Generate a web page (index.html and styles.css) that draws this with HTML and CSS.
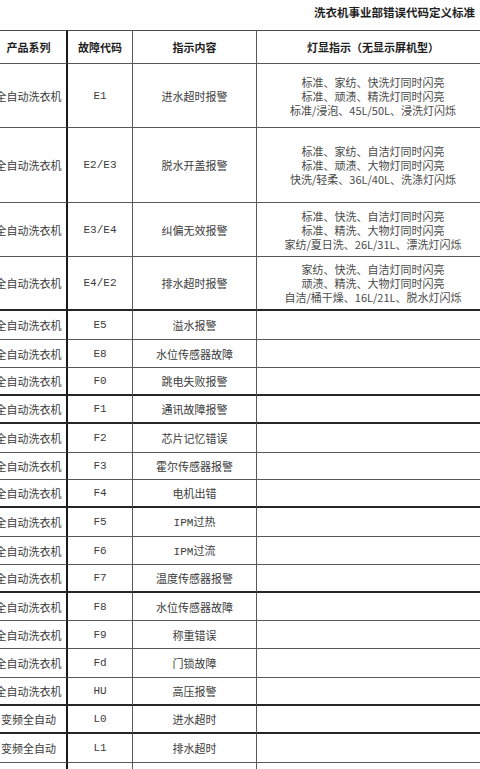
FILE: index.html
```html
<!DOCTYPE html>
<html lang="zh-CN">
<head>
<meta charset="utf-8">
<title>洗衣机事业部错误代码定义标准</title>
<link rel="stylesheet" href="styles.css">
</head>
<body>
<div class="sheet">
  <div class="title">洗衣机事业部错误代码定义标准</div>
  <table class="codes">
    <colgroup>
      <col class="c1"><col class="c2"><col class="c3"><col class="c4">
    </colgroup>
    <thead>
      <tr class="head">
        <th class="series">产品系列</th>
        <th class="code">故障代码</th>
        <th>指示内容</th>
        <th>灯显指示（无显示屏机型）</th>
      </tr>
    </thead>
    <tbody>
      <tr class="h64"><td class="series">全自动洗衣机</td><td class="code mono">E1</td><td class="code">进水超时报警</td><td class="lamp">标准、家纺、快洗灯同时闪亮<br>标准、顽渍、精洗灯同时闪亮<br>标准/浸泡、45L/50L、浸洗灯闪烁</td></tr>
      <tr class="h75"><td class="series">全自动洗衣机</td><td class="code mono">E2/E3</td><td class="code">脱水开盖报警</td><td class="lamp">标准、家纺、自洁灯同时闪亮<br>标准、顽渍、大物灯同时闪亮<br>快洗/轻柔、36L/40L、洗涤灯闪烁</td></tr>
      <tr class="h54"><td class="series">全自动洗衣机</td><td class="code mono">E3/E4</td><td class="code">纠偏无效报警</td><td class="lamp">标准、快洗、自洁灯同时闪亮<br>标准、精洗、大物灯同时闪亮<br>家纺/夏日洗、26L/31L、漂洗灯闪烁</td></tr>
      <tr class="h54 thick"><td class="series">全自动洗衣机</td><td class="code mono">E4/E2</td><td class="code">排水超时报警</td><td class="lamp">家纺、快洗、自洁灯同时闪亮<br>顽渍、精洗、大物灯同时闪亮<br>自洁/桶干燥、16L/21L、脱水灯闪烁</td></tr>
      <tr class="h29"><td class="series">全自动洗衣机</td><td class="code mono">E5</td><td class="code">溢水报警</td><td></td></tr>
      <tr class="h28"><td class="series">全自动洗衣机</td><td class="code mono">E8</td><td class="code">水位传感器故障</td><td></td></tr>
      <tr class="h28 thick"><td class="series">全自动洗衣机</td><td class="code mono">F0</td><td class="code">跳电失败报警</td><td></td></tr>
      <tr class="h28 thick"><td class="series">全自动洗衣机</td><td class="code mono">F1</td><td class="code">通讯故障报警</td><td></td></tr>
      <tr class="h29"><td class="series">全自动洗衣机</td><td class="code mono">F2</td><td class="code">芯片记忆错误</td><td></td></tr>
      <tr class="h27"><td class="series">全自动洗衣机</td><td class="code mono">F3</td><td class="code">霍尔传感器报警</td><td></td></tr>
      <tr class="h28 thick"><td class="series">全自动洗衣机</td><td class="code mono">F4</td><td class="code">电机出错</td><td></td></tr>
      <tr class="h29"><td class="series">全自动洗衣机</td><td class="code mono">F5</td><td class="code"><span class="mono">IPM</span>过热</td><td></td></tr>
      <tr class="h28"><td class="series">全自动洗衣机</td><td class="code mono">F6</td><td class="code"><span class="mono">IPM</span>过流</td><td></td></tr>
      <tr class="h28 thick"><td class="series">全自动洗衣机</td><td class="code mono">F7</td><td class="code">温度传感器报警</td><td></td></tr>
      <tr class="h28"><td class="series">全自动洗衣机</td><td class="code mono">F8</td><td class="code">水位传感器故障</td><td></td></tr>
      <tr class="h28"><td class="series">全自动洗衣机</td><td class="code mono">F9</td><td class="code">称重错误</td><td></td></tr>
      <tr class="h29"><td class="series">全自动洗衣机</td><td class="code mono">Fd</td><td class="code">门锁故障</td><td></td></tr>
      <tr class="h28 thick"><td class="series">全自动洗衣机</td><td class="code mono">HU</td><td class="code">高压报警</td><td></td></tr>
      <tr class="h28 thick"><td class="series">变频全自动</td><td class="code mono">L0</td><td class="code">进水超时</td><td></td></tr>
      <tr class="h29"><td class="series">变频全自动</td><td class="code mono">L1</td><td class="code">排水超时</td><td></td></tr>
      <tr class="h28"><td class="series"></td><td class="code"></td><td class="code"></td><td></td></tr>
    </tbody>
  </table>
</div>
</body>
</html>
```

FILE: styles.css
```css
html, body {
  margin: 0;
  padding: 0;
  background: #ffffff;
}

body {
  width: 480px;
  height: 769px;
  overflow: hidden;
  font-family: "Noto Sans CJK SC", "Noto Sans", sans-serif;
  color: #3a3a3a;
}

.sheet {
  width: 480px;
  overflow: hidden;
}

.title {
  height: 30px;
  box-sizing: border-box;
  padding: 4px 5px 0 0;
  text-align: right;
  font-size: 11.5px;
  line-height: 16px;
  font-weight: 700;
  color: #1e1e1e;
}

.codes {
  margin-left: -9px;
  border-collapse: separate;
  border-spacing: 0;
  table-layout: fixed;
  width: 499px;
}

.c1 { width: 77px; }
.c2 { width: 65px; }
.c3 { width: 124px; }
.c4 { width: 233px; }

.codes th,
.codes td {
  padding: 0;
  text-align: center;
  vertical-align: middle;
  border-bottom: 1px solid #5a5a5a;
  border-right: 1px solid #5a5a5a;
  box-sizing: border-box;
  white-space: nowrap;
  font-size: 11px;
  line-height: 14px;
}

.codes .series {
  border-right: 2px solid #1a1a1a;
}

.head th {
  border-top: 1px solid #4a4a4a;
  height: 34px;
  font-weight: 700;
  color: #1e1e1e;
  font-size: 11px;
}

.codes td.series,
.codes td.code {
  color: #3c3c3c;
}

.mono {
  font-family: "Liberation Mono", "Noto Sans CJK SC", monospace;
  font-size: 11px;
}

.lamp {
  color: #4a4a4a;
  font-size: 11.4px;
  line-height: 14px;
}

.thick td {
  border-bottom: 2px solid #262626;
}

.h64 { height: 64px; }
.h75 { height: 75px; }
.h54 { height: 54px; }
.h29 { height: 29px; }
.h28 { height: 28px; }
.h27 { height: 27px; }
```
